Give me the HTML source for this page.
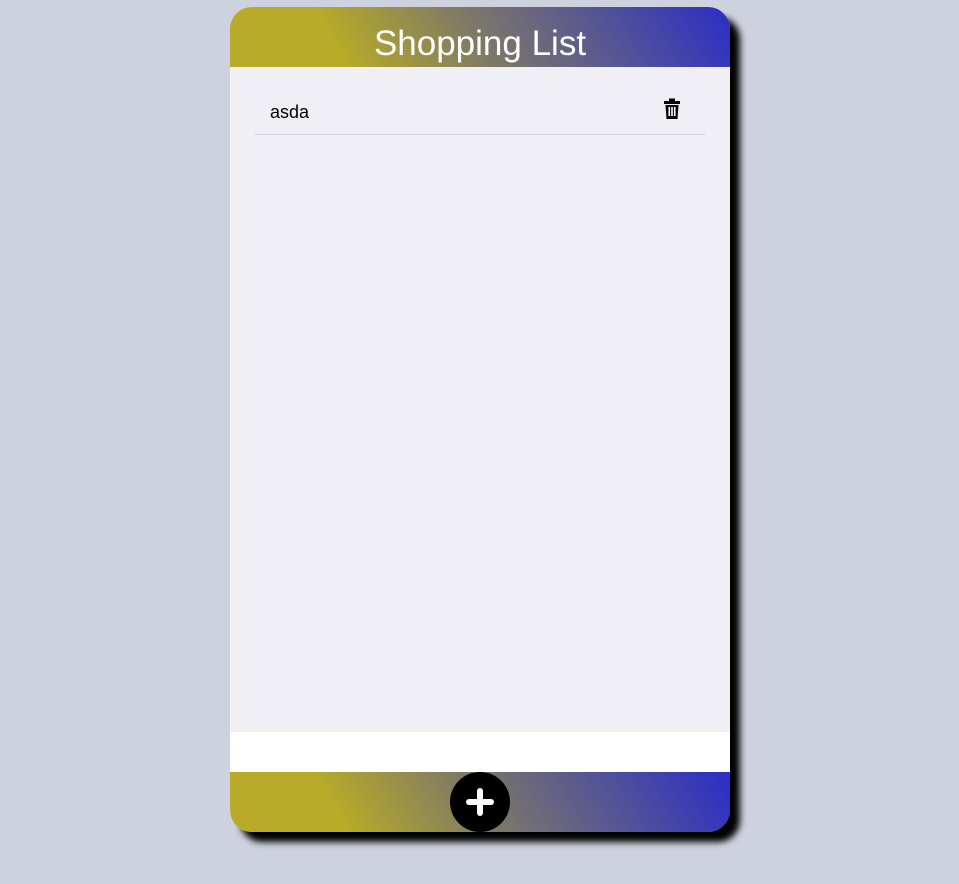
<!DOCTYPE html>
<html><head><style>
html,body{margin:0;padding:0;}
body{width:959px;height:884px;background:#ced2de;position:relative;overflow:hidden;font-family:"Liberation Sans","Noto Sans CJK KR",sans-serif;}
.card{position:absolute;left:230px;top:7px;width:500px;height:825px;border-radius:22px;overflow:hidden;background:#efeff5;box-shadow:10px 10px 7px #000;}
.hdr{position:absolute;left:0;top:0;width:500px;height:60px;background:linear-gradient(60deg,#b7ab27 22%,#7d7868 50%,#2a2ec6 100%);color:#fff;font-size:35px;text-align:center;line-height:74px;}
.item{position:absolute;left:25px;top:88px;width:450px;height:39px;border-bottom:1px solid #d2d2d8;}
.item span{position:absolute;left:15px;top:7px;font-size:18px;color:#000;}
.trash{position:absolute;left:408px;top:3px;}
.white{position:absolute;left:0;top:725px;width:500px;height:40px;background:#fff;}
.ftr{position:absolute;left:0;top:765px;width:500px;height:60px;background:linear-gradient(60deg,#b7ab27 22%,#7d7868 50%,#2a2ec6 100%);}
.btn{position:absolute;left:220px;top:0;width:60px;height:60px;border-radius:50%;background:#000;}
.btn:before{content:"";position:absolute;left:16px;top:27px;width:28px;height:6px;border-radius:3px;background:#fff;}
.btn:after{content:"";position:absolute;left:27px;top:16px;width:6px;height:28px;border-radius:3px;background:#fff;}
</style></head><body>
<div class="card">
<div class="hdr">Shopping List</div>
<div class="item"><span>asda</span>
<svg class="trash" width="18" height="22" viewBox="0 0 18 22"><rect x="1" y="3" width="16" height="3" fill="#000"/><rect x="6" y="0.5" width="6" height="3" fill="#000"/><path d="M2.5 7h13l-1 14h-11z" fill="#000"/><rect x="5.5" y="9" width="1.6" height="9" fill="#fff"/><rect x="8.2" y="9" width="1.6" height="9" fill="#fff"/><rect x="10.9" y="9" width="1.6" height="9" fill="#fff"/></svg>
</div>
<div class="white"></div>
<div class="ftr"><div class="btn"></div></div>
</div>
</body></html>
